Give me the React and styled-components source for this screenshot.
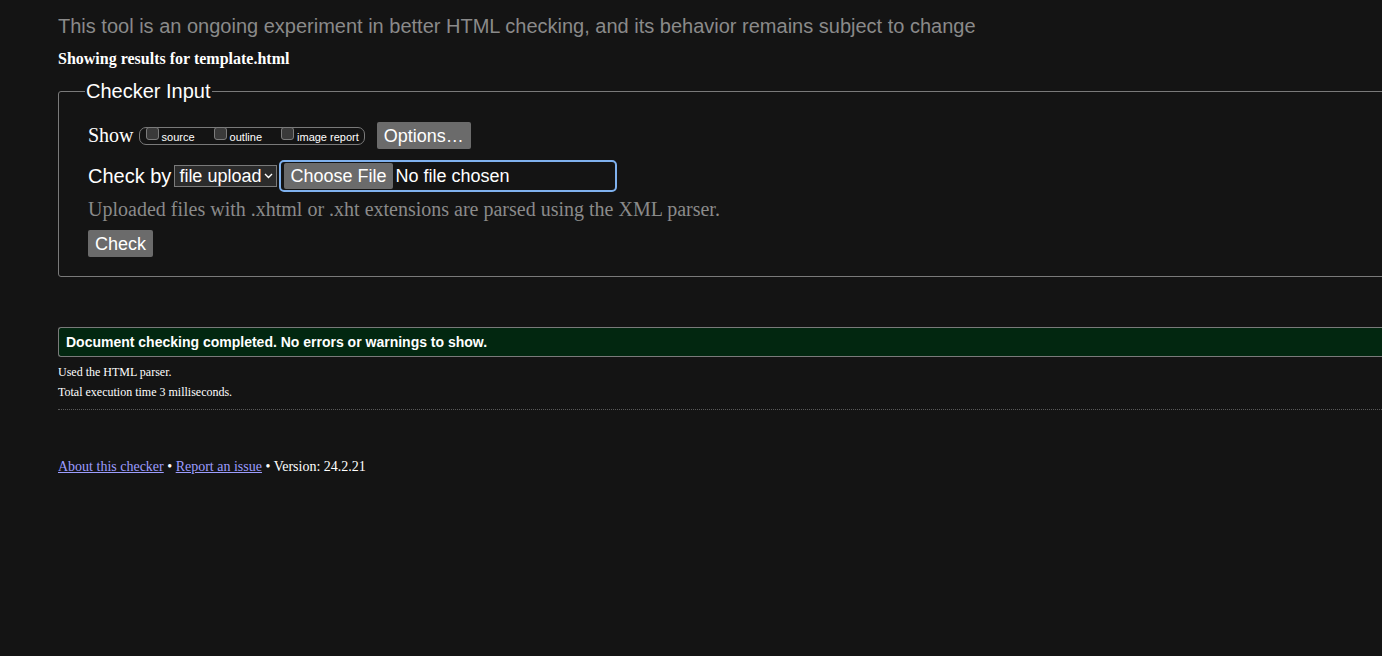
import React from "react";
import styled, { createGlobalStyle } from "styled-components";

const Global = createGlobalStyle`
  html, body { margin: 0; padding: 0; background: #141414; overflow: hidden; }
  body { color: #fff; font-family: "Liberation Serif", serif; }
`;

const Page = styled.div`
  width: 1400px;
  padding: 14px 0 0 58px;
`;

const Intro = styled.p`
  margin: 0;
  font-family: "Liberation Sans", Arial, sans-serif;
  font-size: 20px;
  line-height: 24px;
  color: #8a8a8a;
`;

const ResultsFor = styled.p`
  margin: 11px 0 0;
  font-weight: bold;
  font-size: 16px;
  line-height: 20px;
`;

const Fieldset = styled.fieldset`
  margin: 10px 0 0;
  border: 1px solid #7a7a7a;
  border-radius: 3px;
  padding: 19px 0 19px 29px;
  display: flex;
  flex-direction: column;
  align-items: flex-start;
`;

const Legend = styled.legend`
  font-family: "Liberation Sans", Arial, sans-serif;
  font-size: 20px;
  line-height: 24px;
  padding: 0 1px;
  margin-left: -3px;
  color: #fff;
`;

const Row = styled.div`
  display: flex;
  align-items: center;
  height: ${(p) => p.$h}px;
  margin-top: ${(p) => p.$mt || 0}px;
`;

const SerifLabel = styled.span`
  font-size: 20px;
  margin-right: 5px;
`;

const SansLabel = styled.span`
  font-family: "Liberation Sans", Arial, sans-serif;
  font-size: 20px;
  margin-right: 3px;
`;

const ShowBox = styled.div`
  display: flex;
  align-items: center;
  height: 16px;
  border: 1px solid #7a7a7a;
  border-radius: 7px;
  padding: 0 5px 0 6px;
  margin-right: 12px;
`;

const Opt = styled.label`
  display: flex;
  align-items: flex-start;
  font-family: "Liberation Sans", Arial, sans-serif;
  font-size: 11px;
  margin-right: ${(p) => p.$mr}px;
`;

const Box = styled.input.attrs({ type: "checkbox" })`
  appearance: none;
  width: 13px;
  height: 13px;
  margin: -2px 3px 0 0;
  background: #3a3a3a;
  border: 1px solid #7c7c7c;
  border-radius: 3px;
  box-sizing: border-box;
`;

const OptText = styled.span`
  margin-top: 2px;
`;

const GrayButton = styled.button`
  background: #6b6b6b;
  color: #fff;
  border: none;
  border-radius: 2px;
  font-family: "Liberation Sans", Arial, sans-serif;
  font-size: ${(p) => p.$fs || 18}px;
  height: ${(p) => p.$h || 27}px;
  padding: 0 ${(p) => p.$px || 7}px;
  line-height: 1;
  cursor: pointer;
`;

const Select = styled.div`
  display: flex;
  align-items: center;
  height: 22px;
  box-sizing: border-box;
  border: 1px solid #7a7a7a;
  background: #2b2b2b;
  font-family: "Liberation Sans", Arial, sans-serif;
  font-size: 18px;
  padding: 0 3px 0 4px;
  margin-right: 2px;
  gap: 3px;
`;

const FileBox = styled.div`
  display: flex;
  align-items: center;
  width: 338px;
  height: 32px;
  box-sizing: border-box;
  border: 2px solid #7fb1ee;
  border-radius: 5px;
  padding: 0 0 0 3px;
  font-family: "Liberation Sans", Arial, sans-serif;
  font-size: 18px;
  gap: 3px;
`;

const Help = styled.p`
  margin: 7px 0 0;
  font-size: 20px;
  line-height: 20px;
  color: #8a8a8a;
`;

const Success = styled.div`
  margin-top: 50px;
  height: 30px;
  box-sizing: border-box;
  border: 1px solid #7a7a7a;
  border-right: none;
  border-radius: 3px 0 0 3px;
  background: #022710;
  display: flex;
  align-items: center;
  padding-left: 7px;
  font-family: "Liberation Sans", Arial, sans-serif;
  font-weight: bold;
  font-size: 14px;
`;

const Small = styled.p`
  margin: ${(p) => p.$mt}px 0 0;
  font-size: 12px;
  line-height: 14px;
`;

const Rule = styled.hr`
  margin: 10px 0 0;
  border: none;
  border-top: 1px dotted #5a5a5a;
  height: 0;
`;

const Footer = styled.p`
  margin: 49px 0 0;
  font-size: 14px;
  line-height: 16px;
`;

const Link = styled.a`
  color: #9d9dff;
  text-decoration: underline;
`;

function Chevron() {
  return (
    <svg width="9" height="6" viewBox="0 0 9 6" fill="none">
      <path d="M1 1l3.5 3.5L8 1" stroke="#fff" strokeWidth="1.4" />
    </svg>
  );
}

export default function App() {
  return (
    <>
      <Global />
      <Page>
        <Intro>
          This tool is an ongoing experiment in better HTML checking, and its behavior remains subject to change
        </Intro>
        <ResultsFor>Showing results for template.html</ResultsFor>
        <Fieldset>
          <Legend>Checker Input</Legend>
          <Row $h={27} $mt={0}>
            <SerifLabel>Show</SerifLabel>
            <ShowBox>
              <Opt $mr={19}>
                <Box />
                <OptText>source</OptText>
              </Opt>
              <Opt $mr={19}>
                <Box />
                <OptText>outline</OptText>
              </Opt>
              <Opt $mr={0}>
                <Box />
                <OptText>image report</OptText>
              </Opt>
            </ShowBox>
            <GrayButton $h={27}>Options…</GrayButton>
          </Row>
          <Row $h={32} $mt={11}>
            <SansLabel>Check by</SansLabel>
            <Select>
              <span>file upload</span>
              <Chevron />
            </Select>
            <FileBox>
              <GrayButton $h={26} $px={6}>Choose File</GrayButton>
              <span>No file chosen</span>
            </FileBox>
          </Row>
          <Help>Uploaded files with .xhtml or .xht extensions are parsed using the XML parser.</Help>
          <Row $h={27} $mt={11}>
            <GrayButton $h={27}>Check</GrayButton>
          </Row>
        </Fieldset>
        <Success>Document checking completed. No errors or warnings to show.</Success>
        <Small $mt={8}>Used the HTML parser.</Small>
        <Small $mt={6}>Total execution time 3 milliseconds.</Small>
        <Rule />
        <Footer>
          <Link href="#">About this checker</Link> • <Link href="#">Report an issue</Link> • Version: 24.2.21
        </Footer>
      </Page>
    </>
  );
}
